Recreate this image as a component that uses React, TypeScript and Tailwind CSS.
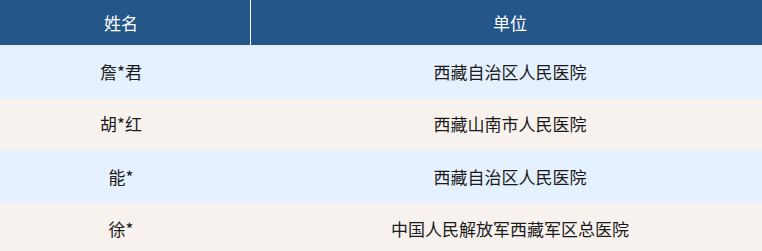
const rows = [
  { name: '詹*君', unit: '西藏自治区人民医院' },
  { name: '胡*红', unit: '西藏山南市人民医院' },
  { name: '能*', unit: '西藏自治区人民医院' },
  { name: '徐*', unit: '中国人民解放军西藏军区总医院' },
]

export default function App() {
  return (
    <div
      className="w-[762px] h-[251px] overflow-hidden bg-white text-[17px]"
      style={{ fontFamily: '"Noto Sans CJK SC", "Noto Sans", sans-serif' }}
    >
      {/* 表头 */}
      <div className="grid grid-cols-[251px_1fr] h-[45px] bg-[#25568a] text-white">
        <div className="flex items-center justify-center pr-[8px] border-r border-white">姓名</div>
        <div className="flex items-center justify-center pl-[7px]">单位</div>
      </div>

      {rows.map((r, i) => (
        <div
          key={i}
          className={
            'grid grid-cols-[251px_1fr] h-[52.5px] text-[#1a1a1a] ' +
            (i % 2 === 0 ? 'bg-[#e5f1ff]' : 'bg-[#f8f2ef]')
          }
        >
          <div className="flex items-center justify-center pr-[9px]">{r.name}</div>
          <div className="flex items-center justify-center pl-[7px]">{r.unit}</div>
        </div>
      ))}
    </div>
  )
}
